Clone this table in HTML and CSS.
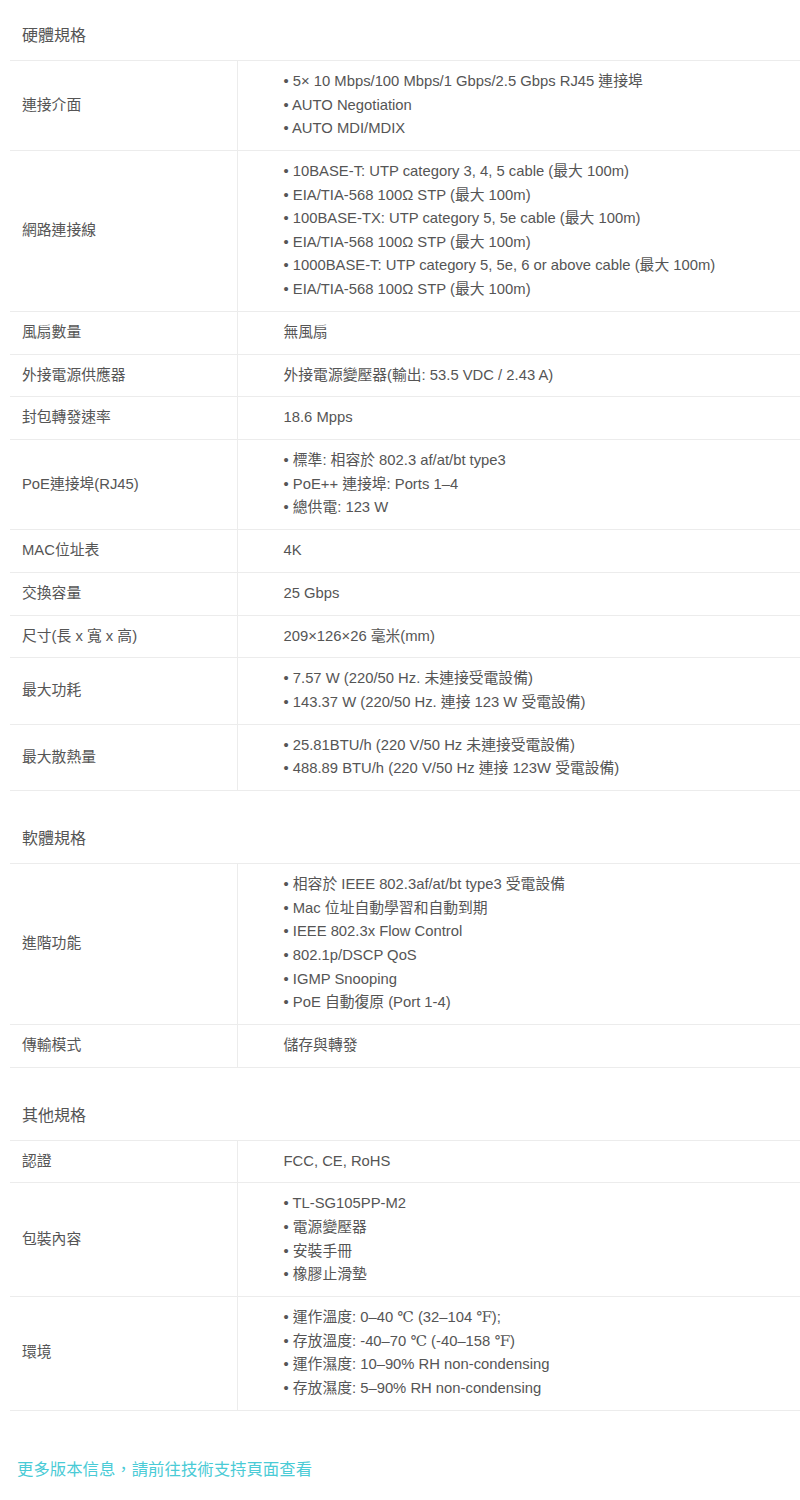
FILE: index.html
```html
<!DOCTYPE html>
<html lang="zh-Hant">
<head>
    <meta charset="UTF-8">
    <meta name="viewport" content="width=device-width, initial-scale=1.0">
    <title>規格</title>
    <link rel="stylesheet" href="styles.css">
</head>
<body>

<div class="specs">

    <!-- 硬體規格 -->
    <h2 class="spec-title">硬體規格</h2>
    <table class="spec-table">
        <tr>
            <td class="label">連接介面</td>
            <td class="value">
                <ul>
                    <li>5× 10 Mbps/100 Mbps/1 Gbps/2.5 Gbps RJ45 連接埠</li>
                    <li>AUTO Negotiation</li>
                    <li>AUTO MDI/MDIX</li>
                </ul>
            </td>
        </tr>
        <tr>
            <td class="label">網路連接線</td>
            <td class="value">
                <ul>
                    <li>10BASE-T: UTP category 3, 4, 5 cable (最大 100m)</li>
                    <li>EIA/TIA-568 100Ω STP (最大 100m)</li>
                    <li>100BASE-TX: UTP category 5, 5e cable (最大 100m)</li>
                    <li>EIA/TIA-568 100Ω STP (最大 100m)</li>
                    <li>1000BASE-T: UTP category 5, 5e, 6 or above cable (最大 100m)</li>
                    <li>EIA/TIA-568 100Ω STP (最大 100m)</li>
                </ul>
            </td>
        </tr>
        <tr>
            <td class="label">風扇數量</td>
            <td class="value">無風扇</td>
        </tr>
        <tr>
            <td class="label">外接電源供應器</td>
            <td class="value">外接電源變壓器(輸出: 53.5 VDC / 2.43 A)</td>
        </tr>
        <tr>
            <td class="label">封包轉發速率</td>
            <td class="value">18.6 Mpps</td>
        </tr>
        <tr>
            <td class="label">PoE連接埠(RJ45)</td>
            <td class="value">
                <ul>
                    <li>標準: 相容於 802.3 af/at/bt type3</li>
                    <li>PoE++ 連接埠: Ports 1–4</li>
                    <li>總供電: 123 W</li>
                </ul>
            </td>
        </tr>
        <tr>
            <td class="label">MAC位址表</td>
            <td class="value">4K</td>
        </tr>
        <tr>
            <td class="label">交換容量</td>
            <td class="value">25 Gbps</td>
        </tr>
        <tr>
            <td class="label">尺寸(長 x 寬 x 高)</td>
            <td class="value">209×126×26 毫米(mm)</td>
        </tr>
        <tr>
            <td class="label">最大功耗</td>
            <td class="value">
                <ul>
                    <li>7.57 W (220/50 Hz. 未連接受電設備)</li>
                    <li>143.37 W (220/50 Hz. 連接 123 W 受電設備)</li>
                </ul>
            </td>
        </tr>
        <tr>
            <td class="label">最大散熱量</td>
            <td class="value">
                <ul>
                    <li>25.81BTU/h (220 V/50 Hz 未連接受電設備)</li>
                    <li>488.89 BTU/h (220 V/50 Hz 連接 123W 受電設備)</li>
                </ul>
            </td>
        </tr>
    </table>

    <!-- 軟體規格 -->
    <h2 class="spec-title">軟體規格</h2>
    <table class="spec-table">
        <tr>
            <td class="label">進階功能</td>
            <td class="value">
                <ul>
                    <li>相容於 IEEE 802.3af/at/bt type3 受電設備</li>
                    <li>Mac 位址自動學習和自動到期</li>
                    <li>IEEE 802.3x Flow Control</li>
                    <li>802.1p/DSCP QoS</li>
                    <li>IGMP Snooping</li>
                    <li>PoE 自動復原 (Port 1-4)</li>
                </ul>
            </td>
        </tr>
        <tr>
            <td class="label">傳輸模式</td>
            <td class="value">儲存與轉發</td>
        </tr>
    </table>

    <!-- 其他規格 -->
    <h2 class="spec-title">其他規格</h2>
    <table class="spec-table">
        <tr>
            <td class="label">認證</td>
            <td class="value">FCC, CE, RoHS</td>
        </tr>
        <tr>
            <td class="label">包裝內容</td>
            <td class="value">
                <ul>
                    <li>TL-SG105PP-M2</li>
                    <li>電源變壓器</li>
                    <li>安裝手冊</li>
                    <li>橡膠止滑墊</li>
                </ul>
            </td>
        </tr>
        <tr>
            <td class="label">環境</td>
            <td class="value">
                <ul>
                    <li>運作溫度: 0–40 <span class="unit">℃</span> (32–104 <span class="unit">℉</span>);</li>
                    <li>存放溫度: -40–70 <span class="unit">℃</span> (-40–158 <span class="unit">℉</span>)</li>
                    <li>運作濕度: 10–90% RH non-condensing</li>
                    <li>存放濕度: 5–90% RH non-condensing</li>
                </ul>
            </td>
        </tr>
    </table>

    <a class="more-link" href="#">更多版本信息，請前往技術支持頁面查看</a>
</div>

</body>
</html>
```

FILE: styles.css
```css
* {
    margin: 0;
    padding: 0;
    box-sizing: border-box;
}

body {
    font-family: 'Liberation Sans', 'Noto Sans CJK TC', sans-serif;
    font-size: 14.8px;
    color: #555;
    background: #fff;
}

.specs {
    padding: 11px 0 40px 10px;
}

.spec-title {
    font-size: 16px;
    font-weight: normal;
    line-height: 26px;
    padding: 12px 12px 11px;
    color: #555;
    border-bottom: 1px solid #ececec;
}

.spec-table {
    width: 100%;
    border-collapse: collapse;
    margin-bottom: 23px;
}

.spec-table td {
    border-bottom: 1px solid #ececec;
    line-height: 23.6px;
    padding: 9px 0 9.2px;
    vertical-align: middle;
}

.spec-table .label {
    width: 227px;
    padding-left: 12px;
    border-right: 1px solid #ececec;
}

.spec-table .value {
    padding-left: 46px;
}

.value ul {
    list-style: none;
}

.value li::before {
    content: "• ";
}

.unit {
    font-family: 'Liberation Serif', 'DejaVu Serif', serif;
}

.more-link {
    display: block;
    margin-top: 46px;
    margin-left: 7px;
    font-size: 16.4px;
    line-height: 24px;
    color: #4acbd6;
    text-decoration: none;
}
```
